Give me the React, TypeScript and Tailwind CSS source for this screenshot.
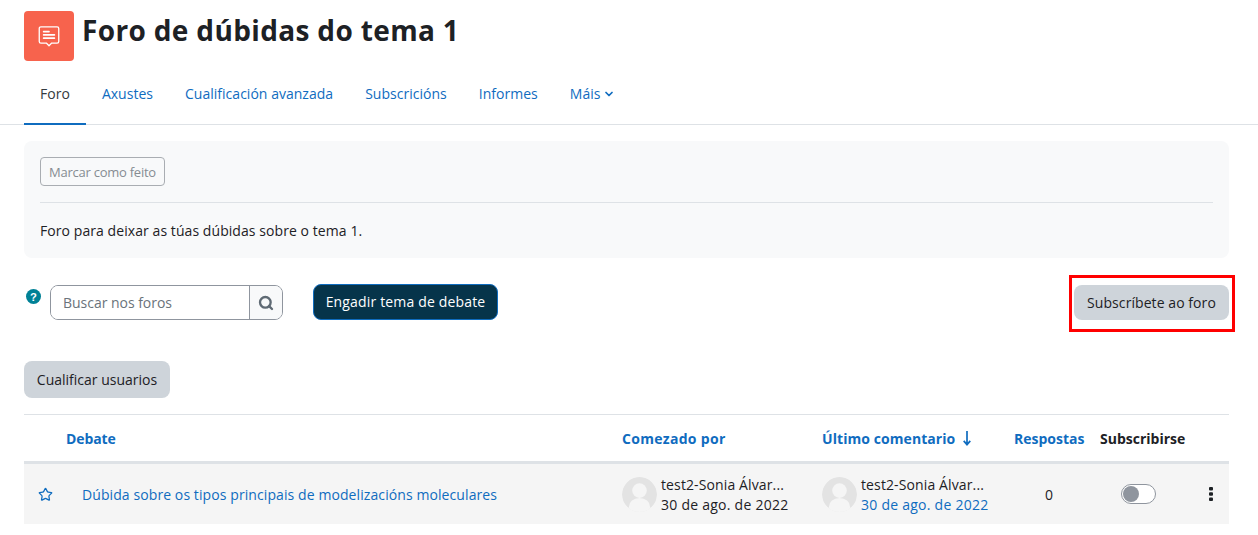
import React from "react";
import { ChevronDown, Search, Star } from "lucide-react";

function Avatar() {
  return (
    <svg viewBox="0 0 36 36" className="w-[35px] h-[35px] shrink-0 rounded-full">
      <circle cx="18" cy="18" r="18" fill="#e3e3e3" />
      <circle cx="18" cy="14" r="7.5" fill="#f5f5f5" />
      <ellipse cx="18" cy="31" rx="11" ry="9.5" fill="#f5f5f5" />
    </svg>
  );
}

export default function App() {
  return (
    <div className="w-[1258px] h-[535px] overflow-hidden bg-white text-[14px] text-[#1d2125] font-['Open_Sans',sans-serif] tracking-[0.07px]">
      <div className="flex items-start gap-[8px] pl-[24px] pt-[11px] h-[75px]">
        <div className="w-[50px] h-[50px] rounded-[4px] bg-[#f7634d] flex items-center justify-center">
          <svg viewBox="0 0 24 24" className="w-[26px] h-[26px]" fill="none" stroke="white" strokeWidth="1.2" strokeLinejoin="round" strokeLinecap="round">
            <path d="M4.5 3.5h15a1.5 1.5 0 0 1 1.5 1.5v12a1.5 1.5 0 0 1-1.5 1.5h-5L12 21l-2.5-2.5h-5A1.5 1.5 0 0 1 3 17V5a1.5 1.5 0 0 1 1.5-1.5z" />
            <path d="M7 8h5M7 11h10M7 14h10" strokeWidth="1.5" />
          </svg>
        </div>
        <h1 className="text-[28px] leading-[40px] -mt-[1px] font-bold tracking-[0.35px]">Foro de dúbidas do tema 1</h1>
      </div>

      <nav className="flex h-[50px] pl-[24px] border-b border-[#dee2e6] tracking-[0.02px]">
        {["Foro", "Axustes", "Cualificación avanzada", "Subscricións", "Informes"].map((t, i) => (
          <a key={t} className={`px-[16px] leading-[37px] h-[50px] border-b-[2px] ${i === 0 ? "border-[#0f6cbf] text-[#343a40]" : "border-transparent text-[#0f6cbf]"}`}>{t}</a>
        ))}
        <a className="px-[16px] leading-[37px] text-[#0f6cbf] flex items-start">
          Máis
          <ChevronDown className="w-[12px] h-[12px] mt-[13px] ml-[3px]" strokeWidth={3.5} />
        </a>
      </nav>

      <div className="mx-[24px] w-[1205px] mt-[16px] h-[117px] rounded-[8px] bg-[#f8f9fa] px-[16px] pt-[16px]">
        <button className="block h-[29px] w-[125px] rounded-[4px] border border-[#a9adb2] text-[#868c92] text-[13px] tracking-[-0.25px] leading-[29px] text-center">Marcar como feito</button>
        <div className="border-t border-[#dee2e6] mt-[16px]" />
        <p className="mt-[17px] leading-[21px]">Foro para deixar as túas dúbidas sobre o tema 1.</p>
      </div>

      <div className="flex items-start pl-[24px] w-[1229px] mt-[26px] h-[36px]">
        <svg viewBox="0 0 16 16" className="w-[15px] h-[15px] ml-[2px] mt-[5px]">
          <circle cx="8" cy="8" r="8" fill="#008196" />
          <text x="8" y="12.3" textAnchor="middle" fontSize="12" fontWeight="700" fill="white" fontFamily="Liberation Sans">?</text>
        </svg>
        <div className="flex ml-[9px] w-[233px] h-[35px] mt-[1px] border border-[#8f959e] rounded-[8px] overflow-hidden">
          <div className="flex-1 px-[12px] leading-[33px] text-[#6a737b] bg-white tracking-[-0.03px]">Buscar nos foros</div>
          <div className="w-[33px] border-l border-[#8f959e] bg-[#f8f9fa] flex items-center justify-center">
            <Search className="w-[16px] h-[16px] text-[#5f6a74]" strokeWidth={3.5} />
          </div>
        </div>
        <button className="ml-[30px] w-[185px] h-[36px] rounded-[8px] bg-[#06344a] border border-[#0f6cbf] text-white text-center leading-[34px] tracking-[0.16px]">Engadir tema de debate</button>
        <div className="ml-auto relative">
          <button className="block mt-[1px] w-[155px] h-[35px] rounded-[8px] bg-[#ced4da] text-center leading-[35px]">Subscríbete ao foro</button>
          <div className="absolute -left-[5px] -right-[6px] -top-[9px] h-[57px] border-[3px] border-[#ff0000]" />
        </div>
      </div>

      <button className="block ml-[24px] mt-[41px] w-[146px] h-[37px] rounded-[8px] bg-[#ced4da] text-center leading-[37px] tracking-[0px]">Cualificar usuarios</button>

      <div className="ml-[24px] w-[1205px] mt-[16px] border-t border-[#dee2e6]">
        <div className="flex items-center h-[46px] font-bold text-[#0f6cbf] border-b-[3px] border-[#dee2e6] box-content">
          <div className="w-[598px] shrink-0 pl-[42px] tracking-[-0.1px]">Debate</div>
          <div className="w-[200px] shrink-0 tracking-[0.3px]">Comezado por</div>
          <div className="w-[192px] shrink-0 flex items-center tracking-[0.07px]">
            Último comentario
            <svg viewBox="0 0 10 16" className="w-[10px] h-[15px] ml-[7px]" fill="none" stroke="#0f6cbf" strokeWidth="1.8">
              <path d="M5 0v14M1.5 10.5 5 14.5l3.5-4" />
            </svg>
          </div>
          <div className="w-[86px] shrink-0 tracking-[0px]">Respostas</div>
          <div className="text-[#1d2125] tracking-[0px]">Subscribirse</div>
        </div>
        <div className="flex items-center h-[60px] bg-[#f5f5f5]">
          <Star className="w-[15px] h-[15px] ml-[14px] shrink-0 text-[#0f6cbf]" strokeWidth={2} />
          <a className="w-[540px] shrink-0 ml-[29px] text-[#0f6cbf] tracking-[0.09px]">Dúbida sobre os tipos principais de modelizacións moleculares</a>
          <div className="w-[200px] shrink-0 flex items-center gap-[4px] leading-[20px]">
            <Avatar />
            <div className="pt-[1px]"><div className="tracking-[0.12px]">test2-Sonia Álvar...</div><div className="tracking-[0.25px]">30 de ago. de 2022</div></div>
          </div>
          <div className="w-[192px] shrink-0 flex items-center gap-[4px] leading-[20px]">
            <Avatar />
            <div className="pt-[1px]"><div className="tracking-[0.12px]">test2-Sonia Álvar...</div><div className="text-[#0f6cbf] tracking-[0.25px]">30 de ago. de 2022</div></div>
          </div>
          <div className="w-[86px] shrink-0 pl-[31px]">0</div>
          <div className="w-[91px] shrink-0 pl-[21px]">
            <div className="w-[35px] h-[20px] rounded-full border border-[#8f959e] bg-white flex items-center pl-[1px]">
              <div className="w-[16px] h-[16px] rounded-full bg-[#8f959e]" />
            </div>
          </div>
          <svg viewBox="0 0 4 14" className="w-[4px] h-[14px] ml-[18px]" fill="#1d2125">
            <rect x="0" y="0" width="4" height="3.6" rx="1" />
            <rect x="0" y="5.2" width="4" height="3.6" rx="1" />
            <rect x="0" y="10.4" width="4" height="3.6" rx="1" />
          </svg>
        </div>
      </div>
    </div>
  );
}
